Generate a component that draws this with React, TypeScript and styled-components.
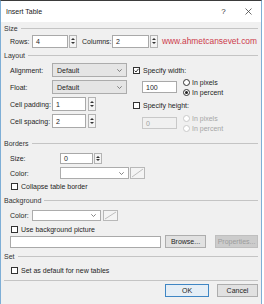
import React from 'react';
import styled, { createGlobalStyle } from 'styled-components';

const GlobalStyle = createGlobalStyle`
  html, body {
    margin: 0;
    padding: 0;
    background: #ffffff;
  }
  body {
    font-family: "Liberation Sans", Arial, sans-serif;
    font-size: 7px;
    color: #1e1e1e;
  }
`;

const Window = styled.div`
  width: 260px;
  height: 303px;
  border-top: 1px solid #3b3b3b;
  border-left: 1px solid #7eaed6;
  border-right: 1px solid #7eaed6;
  background: #f0f0f0;
  display: flex;
  flex-direction: column;
  overflow: hidden;
`;

const TitleBar = styled.div`
  height: 21px;
  flex-shrink: 0;
  background: #ffffff;
  display: flex;
  align-items: center;
  padding-left: 5px;
`;

const Title = styled.span`
  font-size: 7px;
  color: #222;
`;

const TitleControls = styled.div`
  margin-left: auto;
  display: flex;
  height: 100%;
`;

const TitleButton = styled.div`
  width: 25px;
  display: flex;
  align-items: center;
  justify-content: center;
  font-size: 8px;
  color: #333;
`;

const Body = styled.div`
  flex: 1;
  display: flex;
  flex-direction: column;
  padding: 0 3px 0 3px;
`;

const GroupHeader = styled.div<{ $h: number }>`
  height: ${(p) => p.$h}px;
  flex-shrink: 0;
  display: flex;
  align-items: center;
  gap: 3px;
  color: #333;
  &::after {
    content: '';
    flex: 1;
    border-top: 1px solid #c4c4c4;
  }
`;

const Row = styled.div<{ $h: number; $mt?: number; $indent?: number }>`
  height: ${(p) => p.$h}px;
  margin-top: ${(p) => p.$mt ?? 0}px;
  padding-left: ${(p) => p.$indent ?? 6}px;
  flex-shrink: 0;
  display: flex;
  align-items: center;
`;

const Label = styled.span<{ $w?: number; $ml?: number; $disabled?: boolean }>`
  width: ${(p) => (p.$w ? `${p.$w}px` : 'auto')};
  margin-left: ${(p) => p.$ml ?? 0}px;
  flex-shrink: 0;
  white-space: nowrap;
  color: ${(p) => (p.$disabled ? '#a6a6a6' : '#1e1e1e')};
`;

const TextBox = styled.div<{ $w: number; $h: number; $ml?: number; $disabled?: boolean }>`
  width: ${(p) => p.$w}px;
  height: ${(p) => p.$h}px;
  margin-left: ${(p) => p.$ml ?? 0}px;
  box-sizing: border-box;
  flex-shrink: 0;
  background: ${(p) => (p.$disabled ? '#f0f0f0' : '#ffffff')};
  border: 1px solid ${(p) => (p.$disabled ? '#c8c8c8' : '#a9a9a9')};
  color: ${(p) => (p.$disabled ? '#a0a0a0' : '#1e1e1e')};
  display: flex;
  align-items: center;
  padding-left: 3px;
`;

const SpinBox = styled.div<{ $h: number; $ml?: number }>`
  width: 8px;
  height: ${(p) => p.$h}px;
  margin-left: ${(p) => p.$ml ?? 1}px;
  box-sizing: border-box;
  flex-shrink: 0;
  border: 1px solid #b4b4b4;
  background: #f4f4f4;
  display: flex;
  flex-direction: column;
  align-items: center;
  justify-content: space-evenly;
`;

const SelectBox = styled.div<{ $w: number; $h: number; $white?: boolean }>`
  width: ${(p) => p.$w}px;
  height: ${(p) => p.$h}px;
  box-sizing: border-box;
  flex-shrink: 0;
  background: ${(p) => (p.$white ? '#ffffff' : '#e5e5e5')};
  border: 1px solid #acacac;
  display: flex;
  align-items: center;
  padding: 0 4px 0 4px;
  justify-content: space-between;
`;

const Swatch = styled.div<{ $ml: number; $h: number }>`
  width: 15px;
  height: ${(p) => p.$h}px;
  margin-left: ${(p) => p.$ml}px;
  box-sizing: border-box;
  flex-shrink: 0;
  border: 1px solid #b8b8b8;
  background: #f4f4f4;
  display: flex;
`;

const Check = styled.div<{ $ml?: number }>`
  width: 7px;
  height: 7px;
  margin-left: ${(p) => p.$ml ?? 0}px;
  margin-right: 3px;
  box-sizing: border-box;
  flex-shrink: 0;
  border: 1px solid #333;
  background: #fff;
  display: flex;
  align-items: center;
  justify-content: center;
`;

const RadioDot = styled.div<{ $checked?: boolean; $disabled?: boolean }>`
  width: 7px;
  height: 7px;
  margin-right: 2px;
  box-sizing: border-box;
  flex-shrink: 0;
  border-radius: 50%;
  border: 1px solid ${(p) => (p.$disabled ? '#cacaca' : '#333')};
  background: #fff;
  display: flex;
  align-items: center;
  justify-content: center;
  &::after {
    content: '';
    width: 3px;
    height: 3px;
    border-radius: 50%;
    background: ${(p) => (p.$checked ? '#222' : 'transparent')};
  }
`;

const RadioRow = styled.div`
  height: 10px;
  display: flex;
  align-items: center;
`;

const RadioStack = styled.div`
  margin-left: 6px;
  display: flex;
  flex-direction: column;
`;

const LinkText = styled.span`
  margin-left: 4px;
  font-size: 8.4px;
  color: #cc3b4b;
  white-space: nowrap;
`;

const LayoutArea = styled.div`
  height: 70px;
  flex-shrink: 0;
  display: flex;
  padding-left: 6px;
  gap: 6px;
`;

const LeftCol = styled.div`
  width: 117px;
  display: flex;
  flex-direction: column;
  gap: 3px;
`;

const RightCol = styled.div`
  flex: 1;
  display: flex;
  flex-direction: column;
`;

const SideRow = styled.div<{ $h: number; $mt?: number }>`
  height: ${(p) => p.$h}px;
  margin-top: ${(p) => p.$mt ?? 0}px;
  display: flex;
  align-items: center;
`;

const Divider = styled.div`
  margin: 4px 0 3px 0;
  border-top: 1px solid #c4c4c4;
  flex-shrink: 0;
`;

const ButtonRow = styled.div`
  height: 13px;
  display: flex;
  justify-content: flex-end;
  gap: 8px;
  flex-shrink: 0;
`;

const Button = styled.div<{ $w: number; $ml?: number; $primary?: boolean; $disabled?: boolean }>`
  width: ${(p) => p.$w}px;
  height: 13px;
  margin-left: ${(p) => p.$ml ?? 0}px;
  box-sizing: border-box;
  flex-shrink: 0;
  display: flex;
  align-items: center;
  justify-content: center;
  background: ${(p) => (p.$disabled ? '#cccccc' : p.$primary ? '#e5eef6' : '#e1e1e1')};
  border: 1px solid ${(p) => (p.$disabled ? '#bfbfbf' : p.$primary ? '#3f86c4' : '#adadad')};
  color: ${(p) => (p.$disabled ? '#9c9c9c' : '#1e1e1e')};
`;

const Chevron = () => (
  <svg width="5" height="3" viewBox="0 0 5 3">
    <path d="M0.3 0.3 L2.5 2.5 L4.7 0.3" fill="none" stroke="#666" strokeWidth="0.8" />
  </svg>
);

const Spinner = ({ h, ml }: { h: number; ml?: number }) => (
  <SpinBox $h={h} $ml={ml}>
    <svg width="4" height="2" viewBox="0 0 4 2">
      <path d="M0 2 L2 0 L4 2 Z" fill="#333" />
    </svg>
    <svg width="4" height="2" viewBox="0 0 4 2">
      <path d="M0 0 L2 2 L4 0 Z" fill="#333" />
    </svg>
  </SpinBox>
);

const ColorButton = ({ ml, h }: { ml: number; h: number }) => (
  <Swatch $ml={ml} $h={h}>
    <svg width="13" height={h - 2} viewBox={`0 0 13 ${h - 2}`}>
      <line x1="1" y1={h - 3} x2="12" y2="1" stroke="#b0b0b0" strokeWidth="0.8" />
    </svg>
  </Swatch>
);

const CheckBox = ({ checked, ml }: { checked?: boolean; ml?: number }) => (
  <Check $ml={ml}>
    {checked && (
      <svg width="5" height="5" viewBox="0 0 5 5">
        <path d="M0.6 2.6 L2 4 L4.5 0.8" fill="none" stroke="#222" strokeWidth="0.9" />
      </svg>
    )}
  </Check>
);

const App = () => {
  return (
    <>
      <GlobalStyle />
      <Window>
        <TitleBar>
          <Title>Insert Table</Title>
          <TitleControls>
            <TitleButton>?</TitleButton>
            <TitleButton>
              <svg width="7" height="7" viewBox="0 0 7 7">
                <path d="M0.5 0.5 L6.5 6.5 M6.5 0.5 L0.5 6.5" stroke="#444" strokeWidth="0.8" />
              </svg>
            </TitleButton>
          </TitleControls>
        </TitleBar>
        <Body>
          <GroupHeader $h={12}>Size</GroupHeader>
          <Row $h={14}>
            <Label $w={22}>Rows:</Label>
            <TextBox $w={36} $h={13}>4</TextBox>
            <Spinner h={13} />
            <Label $w={30} $ml={5}>Columns:</Label>
            <TextBox $w={37} $h={13}>2</TextBox>
            <Spinner h={13} />
            <LinkText>www.ahmetcansevet.com</LinkText>
          </Row>

          <GroupHeader $h={15}>Layout</GroupHeader>
          <LayoutArea>
            <LeftCol>
              <SideRow $h={14}>
                <Label $w={42}>Alignment:</Label>
                <SelectBox $w={75} $h={14}>
                  <span>Default</span>
                  <Chevron />
                </SelectBox>
              </SideRow>
              <SideRow $h={14}>
                <Label $w={42}>Float:</Label>
                <SelectBox $w={75} $h={14}>
                  <span>Default</span>
                  <Chevron />
                </SelectBox>
              </SideRow>
              <SideRow $h={14}>
                <Label $w={42}>Cell padding:</Label>
                <TextBox $w={34} $h={14}>1</TextBox>
                <Spinner h={14} ml={2} />
              </SideRow>
              <SideRow $h={14}>
                <Label $w={42}>Cell spacing:</Label>
                <TextBox $w={34} $h={14}>2</TextBox>
                <Spinner h={14} ml={2} />
              </SideRow>
            </LeftCol>
            <RightCol>
              <SideRow $h={14}>
                <CheckBox checked />
                <Label>Specify width:</Label>
              </SideRow>
              <SideRow $h={20}>
                <TextBox $w={35} $h={12} $ml={9}>100</TextBox>
                <RadioStack>
                  <RadioRow>
                    <RadioDot />
                    <Label>In pixels</Label>
                  </RadioRow>
                  <RadioRow>
                    <RadioDot $checked />
                    <Label>In percent</Label>
                  </RadioRow>
                </RadioStack>
              </SideRow>
              <SideRow $h={15} $mt={1}>
                <CheckBox />
                <Label>Specify height:</Label>
              </SideRow>
              <SideRow $h={20}>
                <TextBox $w={35} $h={12} $ml={9} $disabled>0</TextBox>
                <RadioStack>
                  <RadioRow>
                    <RadioDot $disabled />
                    <Label $disabled>In pixels</Label>
                  </RadioRow>
                  <RadioRow>
                    <RadioDot $disabled />
                    <Label $disabled>In percent</Label>
                  </RadioRow>
                </RadioStack>
              </SideRow>
            </RightCol>
          </LayoutArea>

          <GroupHeader $h={20}>Borders</GroupHeader>
          <Row $h={11}>
            <Label $w={50}>Size:</Label>
            <TextBox $w={33} $h={11}>0</TextBox>
            <Spinner h={11} />
          </Row>
          <Row $h={14} $mt={2}>
            <Label $w={50}>Color:</Label>
            <SelectBox $w={69} $h={12} $white>
              <span />
              <Chevron />
            </SelectBox>
            <ColorButton ml={1} h={12} />
          </Row>
          <Row $h={12} $indent={7}>
            <CheckBox />
            <Label>Collapse table border</Label>
          </Row>

          <GroupHeader $h={17}>Background</GroupHeader>
          <Row $h={12}>
            <Label $w={22}>Color:</Label>
            <SelectBox $w={69} $h={11} $white>
              <span />
              <Chevron />
            </SelectBox>
            <ColorButton ml={2} h={11} />
          </Row>
          <Row $h={12} $mt={2} $indent={7}>
            <CheckBox />
            <Label>Use background picture</Label>
          </Row>
          <Row $h={13}>
            <TextBox $w={151} $h={12} />
            <Button $w={41} $ml={4}>Browse...</Button>
            <Button $w={43} $ml={9} $disabled>Properties...</Button>
          </Row>

          <GroupHeader $h={16}>Set</GroupHeader>
          <Row $h={12} $indent={7}>
            <CheckBox />
            <Label>Set as default for new tables</Label>
          </Row>
          <Divider />
          <ButtonRow>
            <Button $w={44} $primary>OK</Button>
            <Button $w={41}>Cancel</Button>
          </ButtonRow>
        </Body>
      </Window>
    </>
  );
};

export default App;
